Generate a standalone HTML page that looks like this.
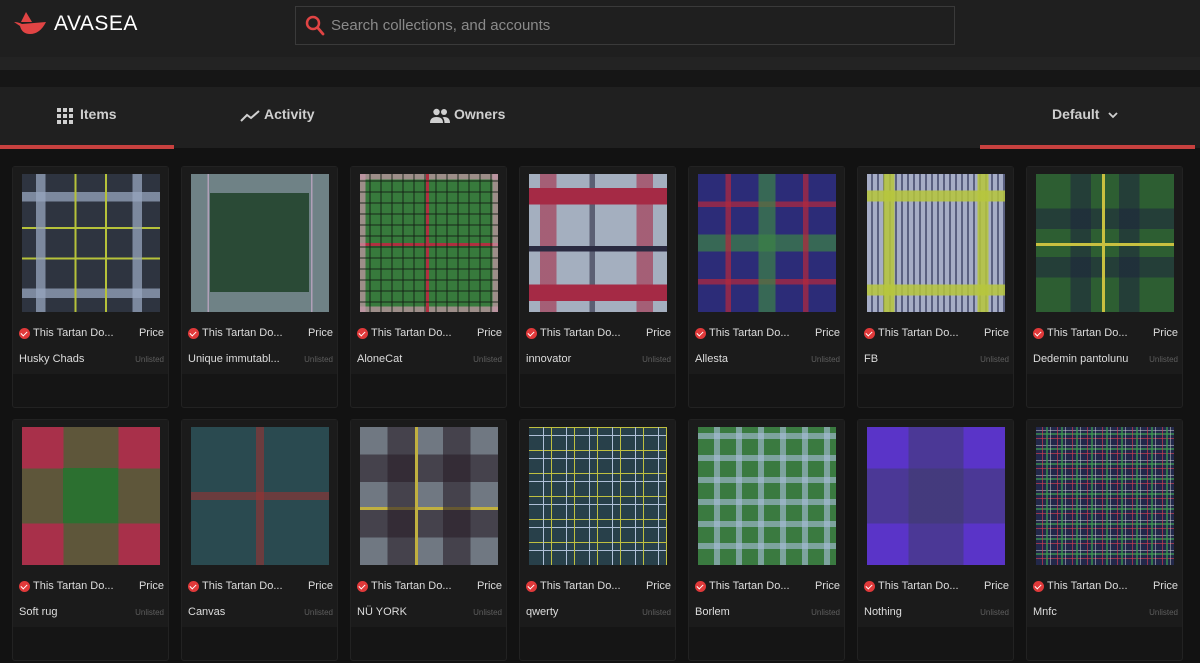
<!DOCTYPE html>
<html><head><meta charset="utf-8"><style>
*{margin:0;padding:0;box-sizing:border-box}
body{width:1200px;height:663px;overflow:hidden;background:#121212;font-family:"Liberation Sans",sans-serif;color:#ddd;position:relative}
.hdr{position:absolute;left:0;top:0;width:1200px;height:57px;background:#1f1f1f}
.band{position:absolute;left:0;top:57px;width:1200px;height:13px;background:#232323}
.band2{position:absolute;left:0;top:70px;width:1200px;height:17px;background:#161616}
.tabs{position:absolute;left:0;top:87px;width:1200px;height:61px;background:#202020}
.logo{position:absolute;left:54px;top:12px;font-size:21px;color:#fff;letter-spacing:.5px}
.search{position:absolute;left:295px;top:6px;width:660px;height:39px;border:1px solid #3a3a3a;background:#1f1f1f}
.search span{position:absolute;left:35px;top:10px;font-size:15px;color:#8a8a8a}
.tab{position:absolute;top:106px;font-size:14px;font-weight:bold;color:#cfcfcf}
.red{position:absolute;top:145px;height:4px;background:#c8413f}
.card{position:absolute;width:157px;height:242px;background:#151515;border:1px solid #222;border-radius:3px}
.card .top{position:absolute;left:0;top:0;width:155px;height:207px;background:#1b1b1b}
.img{position:absolute;left:9px;top:7px;width:138px;height:138px}
.l1{position:absolute;left:6px;top:160px;font-size:11px;color:#ddd;display:flex;align-items:center}
.l1 i{display:inline-block;width:11px;height:11px;border-radius:50%;background:#e0393a;margin-right:3px;position:relative}
.l1 i:after{content:"";position:absolute;left:3px;top:2px;width:3px;height:5px;border:solid #fff;border-width:0 1.5px 1.5px 0;transform:rotate(45deg)}
.pr{position:absolute;right:4px;top:160px;font-size:11px;color:#ddd}
.nm{position:absolute;left:6px;top:186px;font-size:11px;color:#ddd}
.ul{position:absolute;right:4px;top:188px;font-size:8px;color:#5e5e5e}
.t1{background:linear-gradient(90deg,transparent 10%,rgba(150,165,190,.75) 10%,rgba(150,165,190,.75) 17%,transparent 17%,transparent 38%,#b6c23a 38%,#b6c23a 39.5%,transparent 39.5%,transparent 60%,#b6c23a 60%,#b6c23a 61.5%,transparent 61.5%,transparent 80%,rgba(150,165,190,.75) 80%,rgba(150,165,190,.75) 87%,transparent 87%),linear-gradient(0deg,transparent 10%,rgba(150,165,190,.75) 10%,rgba(150,165,190,.75) 17%,transparent 17%,transparent 38%,#b6c23a 38%,#b6c23a 39.5%,transparent 39.5%,transparent 60%,#b6c23a 60%,#b6c23a 61.5%,transparent 61.5%,transparent 80%,rgba(150,165,190,.75) 80%,rgba(150,165,190,.75) 87%,transparent 87%),#2e3440}
.t2{background:linear-gradient(#2a4a36,#2a4a36) 50% 50%/72% 72% no-repeat,linear-gradient(90deg,transparent 12%,#b0a0b8 12% 13%,transparent 13% 87%,#b0a0b8 87% 88%,transparent 88%),#6f8286}
.t3{background:repeating-linear-gradient(90deg,transparent 0 9px,rgba(20,30,20,.45) 9px 11px),repeating-linear-gradient(0deg,transparent 0 9px,rgba(20,30,20,.45) 9px 11px),linear-gradient(90deg,rgba(200,150,170,.7) 0 4%,transparent 4% 48%,#b03040 48% 50%,transparent 50% 96%,rgba(200,150,170,.7) 96%),linear-gradient(0deg,rgba(200,150,170,.7) 0 4%,transparent 4% 48%,#b03040 48% 50%,transparent 50% 96%,rgba(200,150,170,.7) 96%),#377a3c}
.t4{background:linear-gradient(0deg,transparent 8%,#a52a45 8% 20%,transparent 20% 44%,#2a2a40 44% 48%,transparent 48% 78%,#a52a45 78% 90%,transparent 90%),linear-gradient(90deg,transparent 8%,rgba(165,42,69,.6) 8% 20%,transparent 20% 44%,rgba(42,42,64,.6) 44% 48%,transparent 48% 78%,rgba(165,42,69,.6) 78% 90%,transparent 90%),#a4afbf}
.t5{background:linear-gradient(90deg,transparent 20%,rgba(180,40,60,.7) 20% 24%,transparent 24% 44%,rgba(60,130,70,.7) 44% 56%,transparent 56% 76%,rgba(180,40,60,.7) 76% 80%,transparent 80%),linear-gradient(0deg,transparent 20%,rgba(180,40,60,.7) 20% 24%,transparent 24% 44%,rgba(60,130,70,.7) 44% 56%,transparent 56% 76%,rgba(180,40,60,.7) 76% 80%,transparent 80%),#2c2c78}
.t6{background:linear-gradient(90deg,transparent 12%,rgba(183,198,60,.85) 12% 20%,transparent 20% 80%,rgba(183,198,60,.85) 80% 88%,transparent 88%),linear-gradient(0deg,transparent 12%,rgba(183,198,60,.85) 12% 20%,transparent 20% 80%,rgba(183,198,60,.85) 80% 88%,transparent 88%),repeating-linear-gradient(90deg,#a6adc6 0 4px,#5a6080 4px 6px),#9ca4c0}
.t7{background:linear-gradient(90deg,transparent 48%,#c8c040 48% 50%,transparent 50%),linear-gradient(0deg,transparent 48%,#c8c040 48% 50%,transparent 50%),linear-gradient(90deg,transparent 25%,rgba(30,40,60,.6) 25% 40%,transparent 40% 60%,rgba(30,40,60,.6) 60% 75%,transparent 75%),linear-gradient(0deg,transparent 25%,rgba(30,40,60,.6) 25% 40%,transparent 40% 60%,rgba(30,40,60,.6) 60% 75%,transparent 75%),#2d5e32}
.t8{background:linear-gradient(#2c7030,#2c7030) 50% 50%/40% 40% no-repeat,linear-gradient(90deg,transparent 30%,rgba(44,112,48,.6) 30% 70%,transparent 70%),linear-gradient(0deg,transparent 30%,rgba(44,112,48,.6) 30% 70%,transparent 70%),#a8304a}
.t9{background:linear-gradient(90deg,transparent 47%,rgba(150,50,50,.6) 47% 53%,transparent 53%),linear-gradient(0deg,transparent 47%,rgba(150,50,50,.6) 47% 53%,transparent 53%),#2a4a50}
.t10{background:linear-gradient(90deg,transparent 20%,rgba(40,30,40,.6) 20% 40%,#c0b040 40% 42%,transparent 42% 60%,rgba(40,30,40,.6) 60% 80%,transparent 80%),linear-gradient(0deg,transparent 20%,rgba(40,30,40,.6) 20% 40%,#c0b040 40% 42%,transparent 42% 60%,rgba(40,30,40,.6) 60% 80%,transparent 80%),#707882}
.t11{background:repeating-linear-gradient(90deg,transparent 0 14px,#b0c0d8 14px 15px,transparent 15px 22px,#c0c040 22px 23px),repeating-linear-gradient(0deg,transparent 0 14px,#b0c0d8 14px 15px,transparent 15px 22px,#c0c040 22px 23px),#28404a}
.t12{background:repeating-linear-gradient(90deg,transparent 0 16px,rgba(170,190,220,.6) 16px 22px),repeating-linear-gradient(0deg,transparent 0 16px,rgba(170,190,220,.6) 16px 22px),#3a7a40}
.t13{background:linear-gradient(90deg,transparent 30%,rgba(60,60,100,.5) 30% 70%,transparent 70%),linear-gradient(0deg,transparent 30%,rgba(60,60,100,.5) 30% 70%,transparent 70%),#5a34c8}
.t14{background:repeating-linear-gradient(90deg,transparent 0 6px,rgba(200,60,80,.7) 6px 7px,transparent 7px 10px,rgba(60,150,80,.7) 10px 12px,transparent 12px 14px,rgba(210,210,210,.5) 14px 15px),repeating-linear-gradient(0deg,transparent 0 6px,rgba(200,60,80,.7) 6px 7px,transparent 7px 10px,rgba(60,150,80,.7) 10px 12px,transparent 12px 14px,rgba(210,210,210,.5) 14px 15px),#22284a}
</style></head><body>
<div class="hdr"></div><div class="band"></div><div class="band2"></div><div class="tabs"></div>
<svg style="position:absolute;left:12px;top:10px" width="38" height="28" viewBox="0 0 38 28"><path d="M14 2 L9 12 L20 12 Z" fill="#e04444"/><path d="M2 12 Q6 12 10 14 L34 12 Q28 24 18 24 Q10 24 8 16 Q5 14 2 12Z" fill="#e04444"/></svg>
<div class="logo">AVASEA</div>
<div class="search"><svg style="position:absolute;left:9px;top:8px" width="20" height="22" viewBox="0 0 20 22"><circle cx="8" cy="8" r="6" stroke="#e04444" stroke-width="2.5" fill="none"/><path d="M12.5 12.5 L18 19" stroke="#e04444" stroke-width="2.8" stroke-linecap="round"/></svg><span>Search collections, and accounts</span></div>
<svg style="position:absolute;left:57px;top:108px" width="16" height="16" viewBox="0 0 16 16" fill="#cfcfcf"><rect x="0" y="0" width="4" height="4"/><rect x="6" y="0" width="4" height="4"/><rect x="12" y="0" width="4" height="4"/><rect x="0" y="6" width="4" height="4"/><rect x="6" y="6" width="4" height="4"/><rect x="12" y="6" width="4" height="4"/><rect x="0" y="12" width="4" height="4"/><rect x="6" y="12" width="4" height="4"/><rect x="12" y="12" width="4" height="4"/></svg>
<div class="tab" style="left:80px">Items</div>
<svg style="position:absolute;left:240px;top:109px" width="20" height="14" viewBox="0 0 20 14"><path d="M1 12 L7 6 L11 9 L19 2" stroke="#cfcfcf" stroke-width="2" fill="none"/></svg>
<div class="tab" style="left:264px">Activity</div>
<svg style="position:absolute;left:430px;top:108px" width="20" height="15" viewBox="0 0 20 15" fill="#cfcfcf"><circle cx="6.5" cy="4" r="3.2"/><circle cx="14" cy="4" r="3"/><path d="M0 15 Q0 9 6.5 9 Q13 9 13 15Z"/><path d="M14 9 Q20 9 20 15 L14.5 15 Q14.5 11 12.5 9.5Z"/></svg>
<div class="tab" style="left:454px">Owners</div>
<div class="tab" style="left:1052px">Default</div>
<svg style="position:absolute;left:1108px;top:111px" width="10" height="8" viewBox="0 0 10 8"><path d="M1 2 L5 6 L9 2" stroke="#cfcfcf" stroke-width="1.8" fill="none"/></svg>
<div class="red" style="left:0;width:174px"></div>
<div class="red" style="left:980px;width:215px"></div>

<div class="card" style="left:12px;top:166px"><div class="top"></div><div class="img t1"></div><div class="l1"><i></i>This Tartan Do...</div><div class="pr">Price</div><div class="nm">Husky Chads</div><div class="ul">Unlisted</div></div>
<div class="card" style="left:181px;top:166px"><div class="top"></div><div class="img t2"></div><div class="l1"><i></i>This Tartan Do...</div><div class="pr">Price</div><div class="nm">Unique immutabl...</div><div class="ul">Unlisted</div></div>
<div class="card" style="left:350px;top:166px"><div class="top"></div><div class="img t3"></div><div class="l1"><i></i>This Tartan Do...</div><div class="pr">Price</div><div class="nm">AloneCat</div><div class="ul">Unlisted</div></div>
<div class="card" style="left:519px;top:166px"><div class="top"></div><div class="img t4"></div><div class="l1"><i></i>This Tartan Do...</div><div class="pr">Price</div><div class="nm">innovator</div><div class="ul">Unlisted</div></div>
<div class="card" style="left:688px;top:166px"><div class="top"></div><div class="img t5"></div><div class="l1"><i></i>This Tartan Do...</div><div class="pr">Price</div><div class="nm">Allesta</div><div class="ul">Unlisted</div></div>
<div class="card" style="left:857px;top:166px"><div class="top"></div><div class="img t6"></div><div class="l1"><i></i>This Tartan Do...</div><div class="pr">Price</div><div class="nm">FB</div><div class="ul">Unlisted</div></div>
<div class="card" style="left:1026px;top:166px"><div class="top"></div><div class="img t7"></div><div class="l1"><i></i>This Tartan Do...</div><div class="pr">Price</div><div class="nm">Dedemin pantolunu</div><div class="ul">Unlisted</div></div>

<div class="card" style="left:12px;top:419px"><div class="top"></div><div class="img t8"></div><div class="l1"><i></i>This Tartan Do...</div><div class="pr">Price</div><div class="nm">Soft rug</div><div class="ul">Unlisted</div></div>
<div class="card" style="left:181px;top:419px"><div class="top"></div><div class="img t9"></div><div class="l1"><i></i>This Tartan Do...</div><div class="pr">Price</div><div class="nm">Canvas</div><div class="ul">Unlisted</div></div>
<div class="card" style="left:350px;top:419px"><div class="top"></div><div class="img t10"></div><div class="l1"><i></i>This Tartan Do...</div><div class="pr">Price</div><div class="nm">NÜ YORK</div><div class="ul">Unlisted</div></div>
<div class="card" style="left:519px;top:419px"><div class="top"></div><div class="img t11"></div><div class="l1"><i></i>This Tartan Do...</div><div class="pr">Price</div><div class="nm">qwerty</div><div class="ul">Unlisted</div></div>
<div class="card" style="left:688px;top:419px"><div class="top"></div><div class="img t12"></div><div class="l1"><i></i>This Tartan Do...</div><div class="pr">Price</div><div class="nm">Borlem</div><div class="ul">Unlisted</div></div>
<div class="card" style="left:857px;top:419px"><div class="top"></div><div class="img t13"></div><div class="l1"><i></i>This Tartan Do...</div><div class="pr">Price</div><div class="nm">Nothing</div><div class="ul">Unlisted</div></div>
<div class="card" style="left:1026px;top:419px"><div class="top"></div><div class="img t14"></div><div class="l1"><i></i>This Tartan Do...</div><div class="pr">Price</div><div class="nm">Mnfc</div><div class="ul">Unlisted</div></div>
</body></html>
